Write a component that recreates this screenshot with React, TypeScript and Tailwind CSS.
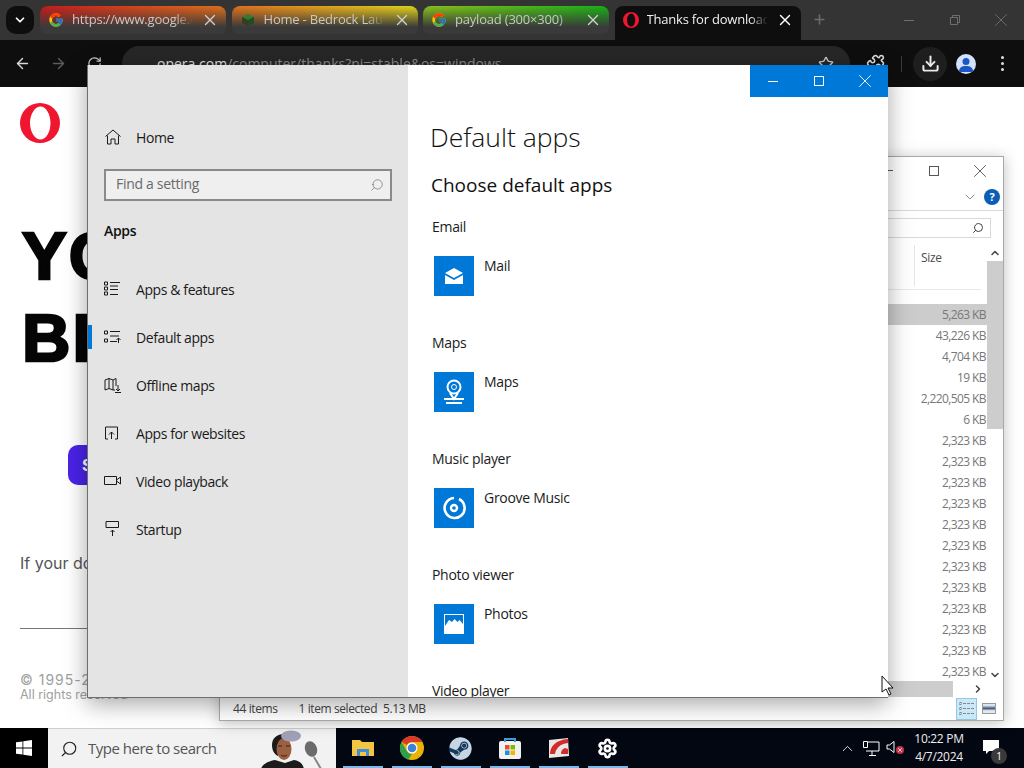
import { FcGoogle } from "react-icons/fc";
import { FaSteam } from "react-icons/fa";
import { ArrowLeft, ArrowRight, RotateCw, Star, Puzzle, Download, ChevronDown, ChevronUp, ChevronRight, Plus, X, Search, Settings } from "lucide-react";

const ui = "font-['Open_Sans','Liberation_Sans',sans-serif]";

const sizes = ["5,263", "43,226", "4,704", "19", "2,220,505", "6", "2,323", "2,323", "2,323", "2,323", "2,323", "2,323", "2,323", "2,323", "2,323", "2,323", "2,323", "2,323"];

function OperaLogo({ size }: { size: number }) {
  return (
    <svg width={size} height={size} viewBox="0 0 40 40">
      <path fillRule="evenodd" fill="#f0162f" d="M20 0a20 20 0 1 0 0 40a20 20 0 1 0 0-40zM20.500 3.500c5.500 0 10 7.500 10 16.500s-4.500 16.500-10 16.500s-10.500-7.500-10.500-16.500s5-16.500 10.500-16.500z" />
    </svg>
  );
}

function GrassBlock() {
  return (
    <svg width="16" height="16" viewBox="0 0 16 16">
      <path d="M8 2l6 3-6 3-6-3z" fill="#2f7d32" />
      <path d="M2 5l6 3v6l-6-3z" fill="#3b3a22" />
      <path d="M14 5l-6 3v6l6-3z" fill="#1e4d24" />
    </svg>
  );
}

function Tab({ title, icon, bg, active }: { title: string; icon: React.ReactNode; bg: string; active?: boolean }) {
  return (
    <div className={`flex items-center w-[186px] rounded-t-lg pl-[8px] pr-[7px] gap-[8px] ${bg} ${active ? "h-[34px] pb-[6px]" : "h-[28px] rounded-b-md"}`}>
      <div className="w-[16px] h-[16px] shrink-0 flex items-center justify-center">{icon}</div>
      <span className={`flex-1 overflow-hidden whitespace-nowrap text-[13px] tracking-[-0.2px] [mask-image:linear-gradient(to_right,black_85%,transparent)] ${active ? "text-[#f0f0f0]" : "text-[#c8c8c8]"}`}>
        {title}
      </span>
      <X size={18} strokeWidth={1.8} className={active ? "text-white shrink-0" : "text-[#d0d0d0] shrink-0"} />
    </div>
  );
}

function TabStrip() {
  return (
    <div className={`h-[40px] bg-[#343434] flex items-start pt-[6px] pl-[6px] ${ui}`}>
      <div className="w-[28px] h-[28px] rounded-[10px] bg-[#0e0e0e] flex items-center justify-center mr-[6px]">
        <ChevronDown size={14} strokeWidth={3} className="text-white" />
      </div>
      <div className="flex gap-[5.5px]">
        <Tab title="https://www.google.com" icon={<FcGoogle size={16} />} bg="bg-[linear-gradient(to_bottom,transparent,#3a3a3a_75%),linear-gradient(to_right,#c81a1a,#e0701c)]" />
        <Tab title="Home - Bedrock Launcher" icon={<GrassBlock />} bg="bg-[linear-gradient(to_bottom,transparent,#3a3a3a_75%),linear-gradient(to_right,#e0701c,#e0d51c)]" />
        <Tab title="payload (300×300)" icon={<FcGoogle size={16} />} bg="bg-[linear-gradient(to_bottom,transparent,#3a3a3a_75%),linear-gradient(to_right,#8ac01c,#16b016)]" />
        <Tab title="Thanks for downloading" icon={<OperaLogo size={16} />} bg="bg-[#0e0e0e]" active />
      </div>
      <Plus size={15} strokeWidth={2.5} className="text-[#6c6c6c] ml-[11px] mt-[6px]" />
      <div className="flex ml-auto -mt-[6px] h-[40px] items-center text-[#6e6e6e]">
        <div className="w-[46px] flex justify-center"><div className="w-[10px] h-px bg-[#6e6e6e]" /></div>
        <div className="w-[46px] flex justify-center">
          <svg width="10" height="10" viewBox="0 0 10 10" fill="none" stroke="currentColor"><path d="M.5 2.500h7v7h-7zM2.500 2.500v-2h7v7h-2" /></svg>
        </div>
        <div className="w-[46px] flex justify-center"><X size={22} strokeWidth={1} /></div>
      </div>
    </div>
  );
}

function Toolbar() {
  return (
    <div className={`h-[47px] bg-[#0e0e0e] flex items-center pl-[14px] pr-[20px] ${ui}`}>
      <ArrowLeft size={17} className="text-[#d8d8d8]" />
      <ArrowRight size={17} className="text-[#5c5c5c] ml-[19px]" />
      <RotateCw size={15} className="text-[#c8c8c8] ml-[20px]" />
      <div className="ml-[20px] w-[728px] h-[35px] rounded-full bg-[#272727] flex items-center pl-[35px] pr-[16px]">
        <span className="text-[14px] text-[#e0e0e0] whitespace-nowrap">opera.com<span className="text-[#8a8a8a]">/computer/thanks?ni=stable&amp;os=windows</span></span>
        <Star size={16} className="ml-auto text-[#c8c8c8]" />
      </div>
      <Puzzle size={19} className="text-[#dcdcdc] ml-[16px]" />
      <div className="w-px h-[16px] bg-[#3c3c3c] ml-[16px]" />
      <div className="w-[34px] h-[34px] rounded-full bg-[#1e1e1e] flex items-center justify-center ml-[11px]">
        <Download size={19} strokeWidth={2.5} className="text-[#e8e8e8]" />
      </div>
      <div className="w-[20px] h-[20px] rounded-full bg-[#d4e3fc] overflow-hidden ml-[9px]">
        <svg viewBox="0 0 20 20" width="20" height="20"><circle cx="10" cy="7.500" r="3.500" fill="#1a56c4" /><path d="M3 18c0-5 3-6 7-6s7 1 7 6z" fill="#1a56c4" /></svg>
      </div>
      <div className="ml-auto flex flex-col gap-[3px]">
        <div className="w-[3px] h-[3px] rounded-full bg-[#e0e0e0]" />
        <div className="w-[3px] h-[3px] rounded-full bg-[#e0e0e0]" />
        <div className="w-[3px] h-[3px] rounded-full bg-[#e0e0e0]" />
      </div>
    </div>
  );
}

function OperaPage() {
  return (
    <div className="flex-1 bg-white pl-[20px] pt-[16px] font-['Inter',sans-serif]">
      <OperaLogo size={40} />
      <div className="mt-[72px] pl-[2px] text-[67px] leading-[82px] tracking-[2px] font-bold font-['Liberation_Sans',sans-serif] [-webkit-text-stroke:2.5px_#050505] text-[#050505] whitespace-nowrap">
        <div>YOUR</div>
        <div>BROWSER</div>
      </div>
      <div className="mt-[66px] ml-[48px] w-[200px] h-[40px] rounded-[10px] bg-[#4a23e8] text-white font-bold text-[16px] flex items-center pl-[14px]">Save</div>
      <div className="mt-[66px] text-[16px] text-[#555]">If your download doesn't start</div>
      <div className="mt-[53px] w-[300px] h-px bg-[#777]" />
      <div className="mt-[43px] text-[#a0a0a0]">
        <div className="text-[14px] leading-[15px] tracking-[1px]">© 1995-2024 Opera</div>
        <div className="text-[12.5px] leading-[15px]">All rights reserved</div>
      </div>
    </div>
  );
}

function NavIcon({ name }: { name: string }) {
  const p = { width: 18, height: 18, viewBox: "0 0 18 18", fill: "none", stroke: "#1a1a1a", strokeWidth: 1 };
  if (name === "home") return <svg {...p}><path d="M1.500 8.500L9 2l7.500 6.500M3.500 7.500V16h3.500v-5h4v5h3.500V7.500" /></svg>;
  if (name === "features") return <svg {...p}><path d="M.5 2h3v3h-3zM.5 7h3v3h-3zM.5 12h3v3h-3zM6 2.500h10M6 6h8M6 9.500h8M6 14.500h8" /></svg>;
  if (name === "default") return <svg {...p}><path d="M.5 3h3v3h-3zM.5 11h3v3h-3zM6 3.500h10M6 8h9M6 13.500h7M14.500 15v-5M12.500 12l2-2 2 2" /></svg>;
  if (name === "maps") return <svg {...p}><path d="M1 4l4-1.500L9 4l3-1.500V10M1 4v10l4-1.500L9 14h2M5 2.500v10M9 4v10M14 9v6M12 13l2 2 2-2M11 16.500h6" /></svg>;
  if (name === "websites") return <svg {...p}><path d="M4 15H1.500V3h12v12H11M7.500 15V8M5 10.500L7.500 8l2.500 2.500" /></svg>;
  if (name === "video") return <svg {...p}><path d="M.5 4.500h12v8H.5zM12.500 8l4-3v7l-4-3" /></svg>;
  return <svg {...p}><path d="M2 1.500h12.500v6H2zM8.500 16V10M6.500 12l2-2 2 2" /></svg>;
}

function NavItem({ icon, label, active }: { icon: string; label: string; active?: boolean }) {
  return (
    <div className="h-[48px] flex items-center pl-[16px] relative">
      {active && <div className="absolute left-0 top-[12px] w-[4px] h-[24px] bg-[#0078d7]" />}
      <div className="w-[32px] shrink-0"><NavIcon name={icon} /></div>
      <span className="text-[14px] tracking-[-0.4px] text-[#1a1a1a]">{label}</span>
    </div>
  );
}

function MailGlyph() {
  return <svg width="20" height="18" viewBox="0 0 20 18"><path d="M1 6l9-5 9 5-9 5z" fill="#fff" /><path d="M1 8l9 5 9-5v9H1z" fill="#fff" /></svg>;
}
function MapsGlyph() {
  return (
    <svg width="22" height="26" viewBox="0 0 22 26" fill="none" stroke="#fff" strokeWidth="2">
      <circle cx="11" cy="8" r="6.500" /><circle cx="11" cy="8" r="2.500" strokeWidth="1" />
      <path d="M7 14l4 6 4-6M1 20h20M3 24h16" />
    </svg>
  );
}
function GrooveGlyph() {
  return (
    <svg width="24" height="24" viewBox="0 0 24 24" fill="none" stroke="#fff">
      <path d="M17 3a10 10 0 1 1-5-1" strokeWidth="2.600" /><circle cx="12" cy="12" r="3" strokeWidth="2.400" />
    </svg>
  );
}
function PhotoGlyph() {
  return <svg width="20" height="20" viewBox="0 0 20 20"><path fillRule="evenodd" fill="#fff" d="M0 0h20v20H0zM1 1v11l4-6 3 2 2.500-3 3 3 2-2 3.500 4V1z" /></svg>;
}

function DefaultApp({ label, app, glyph }: { label: string; app: string; glyph: React.ReactNode }) {
  return (
    <div className="h-[116px] shrink-0 pl-[1px]">
      <div className="text-[14px] tracking-[-0.3px] leading-[20px] text-[#1a1a1a]">{label}</div>
      <div className="flex mt-[19px] pl-[2px]">
        <div className="w-[40px] h-[40px] bg-[#0078d7] flex items-center justify-center">{glyph}</div>
        <span className="text-[14px] tracking-[-0.3px] leading-[20px] text-[#1a1a1a] ml-[10px]">{app}</span>
      </div>
    </div>
  );
}

function SettingsWindow() {
  return (
    <div className={`absolute left-[87px] top-[65px] w-[801px] h-[633px] flex bg-white border-l border-b border-[#6e6e6e] shadow-[0_6px_22px_rgba(0,0,0,0.35)] ${ui}`}>
      <div className="w-[320px] shrink-0 bg-[#e4e4e4] flex flex-col">
        <div className="h-[48px] mt-[48px] flex items-center pl-[16px]">
          <div className="w-[32px]"><NavIcon name="home" /></div>
          <span className="text-[14px] tracking-[-0.4px] text-[#1a1a1a]">Home</span>
        </div>
        <div className="mx-[16px] mt-[8px] h-[32px] border-2 border-[#8a8a8a] bg-[#efefef] flex items-center pl-[10px] pr-[6px]">
          <span className="text-[14px] tracking-[-0.3px] text-[#6a6a6a] pb-[3px]">Find a setting</span>
          <Search size={14} strokeWidth={1} className="ml-auto text-[#555] -scale-x-100" />
        </div>
        <div className="pl-[16px] mt-[20px] text-[14px] tracking-[-0.3px] leading-[20px] font-semibold text-[#111]">Apps</div>
        <div className="mt-[24px] flex flex-col">
          <NavItem icon="features" label="Apps & features" />
          <NavItem icon="default" label="Default apps" active />
          <NavItem icon="maps" label="Offline maps" />
          <NavItem icon="websites" label="Apps for websites" />
          <NavItem icon="video" label="Video playback" />
          <NavItem icon="startup" label="Startup" />
        </div>
      </div>
      <div className="flex-1 overflow-hidden pl-[22px]">
        <div className="flex justify-end h-[32px]">
          <div className="flex bg-[#0078d7] text-white">
            <div className="w-[46px] flex items-center justify-center"><div className="w-[10px] h-px bg-white" /></div>
            <div className="w-[46px] flex items-center justify-center"><div className="w-[10px] h-[10px] border border-white" /></div>
            <div className="w-[46px] flex items-center justify-center"><X size={22} strokeWidth={1} /></div>
          </div>
        </div>
        <div className="text-[26.500px] leading-[36px] font-light text-[#111] mt-[22px]">Default apps</div>
        <div className="text-[19px] leading-[28px] text-[#111] pl-[1px] mt-[16px]">Choose default apps</div>
        <div className="mt-[18px] pl-[1px] flex flex-col">
          <DefaultApp label="Email" app="Mail" glyph={<MailGlyph />} />
          <DefaultApp label="Maps" app="Maps" glyph={<MapsGlyph />} />
          <DefaultApp label="Music player" app="Groove Music" glyph={<GrooveGlyph />} />
          <DefaultApp label="Photo viewer" app="Photos" glyph={<PhotoGlyph />} />
          <DefaultApp label="Video player" app="Movies & TV" glyph={<div />} />
        </div>
      </div>
    </div>
  );
}

function ExplorerWindow() {
  return (
    <div className={`absolute left-[219px] top-[156px] w-[785px] h-[565px] bg-white border border-[#a8a8a8] flex flex-col shadow-[0_2px_14px_rgba(0,0,0,0.25)] ${ui}`}>
      <div className="h-[27px] flex justify-end text-[#555] shrink-0">
        <div className="w-[46px] flex items-center justify-center"><div className="w-[10px] h-px bg-[#555]" /></div>
        <div className="w-[46px] flex items-center justify-center"><div className="w-[10px] h-[10px] border border-[#555]" /></div>
        <div className="w-[46px] flex items-center justify-center"><X size={22} strokeWidth={1} /></div>
      </div>
      <div className="h-[27px] flex items-center justify-end gap-[6px] pr-[3px] border-b border-[#d9d9d9] shrink-0">
        <ChevronDown size={16} strokeWidth={1} className="text-[#555]" />
        <div className="w-[16px] h-[16px] rounded-full bg-[#0a5fb4] text-white text-[11px] leading-[16px] text-center font-bold">?</div>
      </div>
      <div className="h-[34px] flex justify-end items-center pr-[12px] shrink-0">
        <div className="w-[300px] h-[20px] border border-[#d9d9d9] flex items-center justify-end pr-[6px]">
          <Search size={12} strokeWidth={2} className="text-[#444] -scale-x-100" />
        </div>
      </div>
      <div className="flex-1 flex min-h-0">
        <div className="flex-1 min-w-0 flex flex-col">
          <div className="h-[45px] flex justify-end shrink-0 border-b border-[#e9e9e9] mr-[6px]">
            <div className="w-[67px] border-l border-[#e5e5e5] h-[41px] pl-[6px] pt-[5px] text-[12px] tracking-[-0.3px] leading-[16px] text-[#4c4c4c]">Size</div>
          </div>
          <div className="pt-[14px] flex flex-col">
            {sizes.map((s, i) => (
              <div key={i} className={`h-[21px] flex items-center justify-end pr-[1px] text-[12px] tracking-[-0.6px] text-[#777] ${i === 0 ? "bg-[#cccccc]" : ""}`}>{s} KB</div>
            ))}
          </div>
        </div>
        <div className="w-[16px] flex flex-col items-center shrink-0">
          <ChevronUp size={12} strokeWidth={3} className="text-[#444] my-[2px]" />
          <div className="w-full h-[168px] bg-[#cdcdcd]" />
          <ChevronDown size={12} strokeWidth={3} className="text-[#444] mt-auto" />
        </div>
      </div>
      <div className="h-[16px] flex items-center shrink-0">
        <div className="w-[733px] h-full bg-[#cdcdcd]" />
        <ChevronRight size={12} strokeWidth={3} className="text-[#444] ml-auto mr-[19px]" />
      </div>
      <div className="h-[23px] flex items-center pl-[13px] text-[12px] tracking-[-0.4px] text-[#444] shrink-0">
        <span>44 items</span>
        <span className="ml-[21px]">1 item selected</span>
        <span className="ml-[6px]">5.13 MB</span>
        <div className="ml-auto flex items-center mr-[7px] gap-[5px]">
          <div className="w-[21px] h-[22px] bg-[#cce8f6] border border-[#8fc8e8] flex items-center justify-center">
            <svg width="15" height="13" viewBox="0 0 15 13" fill="none" stroke="#7a8a96"><path d="M.5.500h2v2h-2zM.5 5.500h2v2h-2zM.5 10.500h2v2h-2zM4 1.500h11M4 6.500h11M4 11.500h11" strokeDasharray="3 1" /></svg>
          </div>
          <div className="w-[14px] h-[11px] border border-[#909aa4] bg-[linear-gradient(to_bottom,#dfe6ec_15%,#3e5f80_50%,#e8e8e8_75%)]" />
        </div>
      </div>
    </div>
  );
}

function ChromeIcon() {
  return (
    <svg width="24" height="24" viewBox="0 0 24 24">
      <circle cx="12" cy="12" r="12" fill="#eab308" />
      <path d="M12 0a12 12 0 0 1 10.400 6H12a6 6 0 0 0-5.200 3L1.600 6A12 12 0 0 1 12 0z" fill="#db3a2b" />
      <path d="M1.600 6l5.200 9a6 6 0 0 0 5.200 3l-3.700 5.600A12 12 0 0 1 1.600 6z" fill="#2e9e4f" />
      <circle cx="12" cy="12" r="5.500" fill="#fff" /><circle cx="12" cy="12" r="4.300" fill="#3b82d8" />
    </svg>
  );
}

function TaskbarApp({ children }: { children: React.ReactNode }) {
  return (
    <div className="w-[49px] h-[40px] flex items-center justify-center relative">
      {children}
      <div className="absolute bottom-0 left-[5px] w-[40px] h-[2px] bg-[#76b9ed]" />
    </div>
  );
}

function SearchPerson() {
  return (
    <svg width="66" height="40" viewBox="0 0 66 40" className="absolute right-[10px] top-0">
      <path d="M1 40c1-5 8-8 14-9l10 3 9-3c6 1 9 4 10 9z" fill="#1c1c1c" />
      <path d="M12 16c0-7 5-11 12-11l-3 14-3 8c-4-2-6-6-6-11z" fill="#1f1a1a" />
      <ellipse cx="24" cy="20" rx="7.500" ry="11" fill="#9a6040" />
      <path d="M18 17h4M26 17h4M21 26c2 1.500 4 1.500 6 0" stroke="#3a2018" strokeWidth="1" fill="none" />
      <ellipse cx="31" cy="7" rx="10" ry="5.500" fill="#a0a0b8" />
      <ellipse cx="51" cy="20" rx="6" ry="8" fill="#6b6b6b" transform="rotate(-20 51 20)" />
      <path d="M54 28l7 12" stroke="#888" strokeWidth="2" />
    </svg>
  );
}

function Taskbar() {
  return (
    <div className={`h-[40px] bg-[#030712] flex items-center ${ui}`}>
      <div className="w-[48px] h-full bg-black flex items-center justify-center">
        <svg width="16" height="16" viewBox="0 0 16 16" fill="#fff"><path d="M0 2.300l6.500-.9v6.200H0zM7.300 1.300L16 0v7.600H7.300zM0 8.400h6.500v6.200L0 13.700zM7.300 8.400H16V16l-8.700-1.200z" /></svg>
      </div>
      <div className="w-[288px] h-full bg-[#f2f2f2] flex items-center pl-[12px] relative overflow-hidden border-t border-[#cfcfcf]">
        <Search size={18} strokeWidth={1.5} className="text-[#222] -scale-x-100" />
        <span className="ml-[10px] text-[15px] tracking-[-0.5px] text-[#555]">Type here to search</span>
        <SearchPerson />
      </div>
      <div className="flex pl-[2px]">
        <TaskbarApp>
          <svg width="22" height="20" viewBox="0 0 22 20"><path d="M0 2h8l2 2h12v14H0z" fill="#f4c542" /><path d="M5 11h12v7H5z" fill="#3f8fd8" /><path d="M8 14h6v4H8z" fill="#f4c542" /></svg>
        </TaskbarApp>
        <TaskbarApp><ChromeIcon /></TaskbarApp>
        <TaskbarApp>
          <FaSteam size={23} className="text-[#c7d5e0] bg-[#14395c] rounded-full" />
        </TaskbarApp>
        <TaskbarApp>
          <svg width="22" height="22" viewBox="0 0 22 22"><rect x="0" y="4" width="22" height="18" rx="2" fill="#f1f1f1" /><path d="M6 5V2h10v3" fill="none" stroke="#3aa0dc" strokeWidth="2" /><rect x="6" y="8" width="4.500" height="4.500" fill="#e2502c" /><rect x="11.500" y="8" width="4.500" height="4.500" fill="#7fba00" /><rect x="6" y="13.500" width="4.500" height="4.500" fill="#1e90dc" /><rect x="11.500" y="13.500" width="4.500" height="4.500" fill="#f4b400" /></svg>
        </TaskbarApp>
        <TaskbarApp>
          <svg width="22" height="22" viewBox="0 0 22 22"><path d="M1 3l19-2 1 18-20 2z" fill="#e8e8e8" /><path d="M2 17C2 9 8 3 20 2v4C12 7 8 11 7 17z" fill="#d62a2a" /><path d="M13 17c0-3 1-5 4-6l3 1v5z" fill="#d62a2a" /></svg>
        </TaskbarApp>
        <TaskbarApp><Settings size={21} strokeWidth={3} className="text-white" /></TaskbarApp>
      </div>
      <div className="ml-auto flex items-center h-full">
        <ChevronUp size={17} strokeWidth={1.2} className="text-white mr-[7px]" />
        <svg width="17" height="15" viewBox="0 0 17 15" fill="none" stroke="#fff" className="mr-[6px]"><path d="M5 1h11v9H3M9 10v4M6 14.500h7M.5.500h4v6h-4z" /></svg>
        <div className="relative w-[20px] h-[16px] mr-[8px]">
          <svg width="12" height="14" viewBox="0 0 12 14" fill="none" stroke="#fff"><path d="M1 5h2.500L8 1.500v11L3.500 9H1z" /></svg>
          <div className="absolute left-[10px] top-[6px] w-[8px] h-[8px] rounded-full bg-[#c8324a] flex items-center justify-center">
            <X size={6} strokeWidth={3} className="text-white" />
          </div>
        </div>
        <div className="w-[50px] whitespace-nowrap text-[12px] tracking-[-0.3px] leading-[18px] text-[#eee] text-center">
          <div>10:22 PM</div>
          <div>4/7/2024</div>
        </div>
        <div className="w-[60px] h-full relative">
          <svg width="16" height="15" viewBox="0 0 16 15" fill="#fff" className="absolute left-[19px] top-[12px]"><path d="M0 0h16v11H6l-3 3v-3H0z" /></svg>
          <div className="absolute left-[27px] top-[20px] w-[16px] h-[16px] rounded-full bg-[#3a3a3a] text-white text-[10px] leading-[16px] text-center">1</div>
        </div>
      </div>
    </div>
  );
}

export default function App() {
  return (
    <div className="relative w-[1024px] h-[768px] overflow-hidden flex flex-col">
      <TabStrip />
      <Toolbar />
      <OperaPage />
      <Taskbar />
      <ExplorerWindow />
      <SettingsWindow />
      <svg width="14" height="22" viewBox="0 0 14 22" className="absolute left-[881px] top-[675px]">
        <path d="M1 1v16l4-3 3 6 2-1-3-6h5z" fill="#fff" stroke="#111" />
      </svg>
    </div>
  );
}
